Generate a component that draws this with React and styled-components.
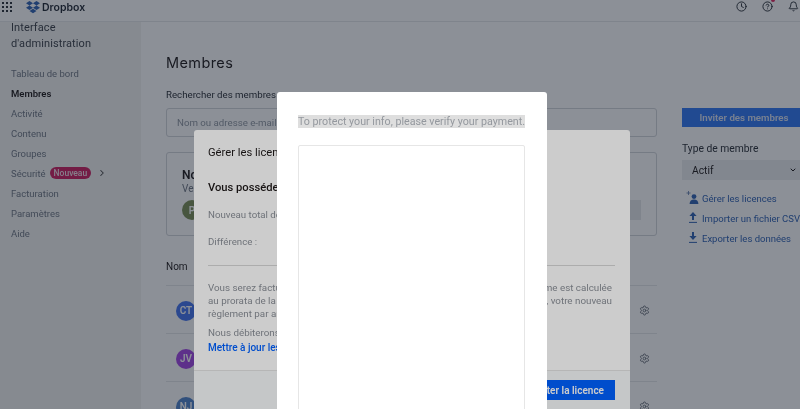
import React from "react";
import styled, { createGlobalStyle } from "styled-components";
import { Clock, CircleHelp, Bell, Settings, ChevronRight, ChevronDown } from "lucide-react";

const GlobalStyle = createGlobalStyle`
  html, body {
    margin: 0;
    padding: 0;
    height: 100%;
    overflow: hidden;
    background: #fff;
    font-family: Roboto, "Liberation Sans", sans-serif;
  }
`;

const navItems = ["Tableau de bord", "Membres", "Activité", "Contenu", "Groupes", "Sécurité", "Facturation", "Paramètres", "Aide"];

const members = [
  { initials: "CT", color: "#4274f0" },
  { initials: "JV", color: "#a545e6" },
  { initials: "NJ", color: "#4f82cc" },
];

const DropboxLogo = () => (
  <svg width="14" height="13" viewBox="0 0 24 22" fill="#2f62b4">
    <path d="M6 0 0 3.9l6 3.8-6 3.9 6 3.8 6-3.9 6 3.9 6-3.8-6-3.9 6-3.8L18 0l-6 3.9zM12 3.9l6 3.8-6 3.9-6-3.9zM6 17l6 3.9 6-3.9-6-3.8z" />
  </svg>
);

const AddUserIcon = () => (
  <svg width="14" height="14" viewBox="0 0 14 14" fill="#2f62b4">
    <circle cx="8" cy="5.6" r="2.4" />
    <path d="M3.6 13c0-3 2-4.4 4.4-4.4s4.4 1.4 4.4 4.4z" />
    <path d="M2.5 0v4M.5 2h4" stroke="#5d79a8" strokeWidth=".8" />
  </svg>
);

const ArrowIcon = ({ down }) => (
  <svg width="14" height="14" viewBox="0 0 14 14" fill="#2f62b4">
    <path d={down ? "M6 1h2v4h2.6L7 9 3.4 5H6z" : "M7 1l3.6 4H8v4H6V5H3.4z"} />
    <path d="M3 11.4h8" stroke="#2f62b4" strokeWidth="1" />
  </svg>
);

export default function App() {
  return (
    <Screen>
      <GlobalStyle />
      <TopBar>
        <Waffle>
          {Array.from({ length: 9 }).map((_, i) => (
            <i key={i} />
          ))}
        </Waffle>
        <Brand>
          <DropboxLogo />
          <span>Dropbox</span>
        </Brand>
        <TopIcons>
          <Clock size={11} />
          <HelpWrap>
            <CircleHelp size={11} />
            <RedDot />
          </HelpWrap>
          <Bell size={11} />
        </TopIcons>
      </TopBar>

      <Body>
        <Sidebar>
          <SideTitle>Interface d'administration</SideTitle>
          <Nav>
            {navItems.map((item) => (
              <NavItem key={item} $active={item === "Membres"}>
                {item}
                {item === "Sécurité" && (
                  <>
                    <NewBadge>Nouveau</NewBadge>
                    <ChevronRight size={10} strokeWidth={2.5} />
                  </>
                )}
              </NavItem>
            ))}
          </Nav>
        </Sidebar>

        <Main>
          <Content>
            <PageTitle>Membres</PageTitle>
            <SearchLabel>Rechercher des membres</SearchLabel>
            <SearchBox>Nom ou adresse e-mail</SearchBox>
            <NoticeCard>
              <NoticeTitle>No</NoticeTitle>
              <NoticeText>Ve</NoticeText>
              <NoticeFoot>
                <Avatar $color="#7b8f55">P</Avatar>
                <GreyButton />
              </NoticeFoot>
            </NoticeCard>
            <ColumnHead>Nom</ColumnHead>
            {members.map((m) => (
              <MemberRow key={m.initials}>
                <Avatar $color={m.color}>{m.initials}</Avatar>
                <Settings size={11} />
              </MemberRow>
            ))}
          </Content>

          <Aside>
            <InviteButton>Inviter des membres</InviteButton>
            <AsideLabel>Type de membre</AsideLabel>
            <Select>
              Actif
              <ChevronDown size={8} strokeWidth={3} />
            </Select>
            <AsideLinks>
              <AsideLink><AddUserIcon />Gérer les licences</AsideLink>
              <AsideLink><ArrowIcon />Importer un fichier CSV</AsideLink>
              <AsideLink><ArrowIcon down />Exporter les données</AsideLink>
            </AsideLinks>
          </Aside>
        </Main>
      </Body>

      <Backdrop />
      <LicenceModal>
        <LicenceBody>
          <LicenceTitle>Gérer les licences</LicenceTitle>
          <LicenceHeading>Vous possédez</LicenceHeading>
          <LicenceField>Nouveau total de</LicenceField>
          <LicenceField>Différence :</LicenceField>
          <Divider />
          <Para>
            <ParaLine><span>Vous serez facturé</span><span>Cette somme est calculée</span></ParaLine>
            <ParaLine><span>au prorata de la</span><span>2022, votre nouveau</span></ParaLine>
            <ParaLine><span>règlement par an</span></ParaLine>
          </Para>
          <ParaNote>Nous débiterons</ParaNote>
          <UpdateLink>Mettre à jour les</UpdateLink>
        </LicenceBody>
        <LicenceFooter>
          <PrimaryButton>Ajouter la licence</PrimaryButton>
        </LicenceFooter>
      </LicenceModal>

      <TopBackdrop />
      <PaymentModal>
        <PaymentText>
          <mark>To protect your info, please verify your payment.</mark>
        </PaymentText>
        <PaymentFrame />
      </PaymentModal>
    </Screen>
  );
}

const Screen = styled.div`
  position: relative;
  width: 800px;
  height: 409px;
  overflow: hidden;
  background: #fff;
  color: #1e1919;
  filter: blur(0.55px);
`;

const TopBar = styled.header`
  display: flex;
  align-items: center;
  height: 22px;
  padding: 0 2px;
  box-sizing: border-box;
  border-bottom: 1px solid #e6e8ea;
`;

const Waffle = styled.div`
  display: grid;
  grid-template-columns: repeat(3, 2px);
  gap: 2px;
  margin-top: -7px;
  i { width: 2px; height: 2px; background: #2a2f38; }
`;

const Brand = styled.div`
  display: flex;
  align-items: center;
  gap: 2px;
  margin-left: 14px;
  font-family: Inter, sans-serif;
  font-size: 10.5px;
  font-weight: 600;
  color: #1e2530;
  margin-top: -7px;
  svg { display: block; }
`;

const TopIcons = styled.div`
  display: flex;
  align-items: center;
  gap: 15px;
  margin-left: auto;
  margin-right: -1px;
  margin-top: -8px;
  color: #20262e;
  svg { display: block; }
`;

const HelpWrap = styled.div`
  position: relative;
`;

const RedDot = styled.span`
  position: absolute;
  top: -3px;
  right: -2px;
  width: 4px;
  height: 4px;
  border-radius: 50%;
  background: #e0245e;
`;

const Body = styled.div`
  display: flex;
`;

const Sidebar = styled.aside`
  width: 141px;
  height: 387px;
  flex-shrink: 0;
  box-sizing: border-box;
  padding-left: 11px;
  background: #f4f4f2;
`;

const SideTitle = styled.div`
  width: 90px;
  margin-top: -2px;
  font-size: 11px;
  line-height: 16px;
  letter-spacing: 0.1px;
  color: #3a3f47;
`;

const Nav = styled.nav`
  display: flex;
  flex-direction: column;
  margin-top: 11px;
`;

const NavItem = styled.div`
  display: flex;
  align-items: center;
  height: 20px;
  font-size: 9.5px;
  font-weight: ${(p) => (p.$active ? 600 : 400)};
  color: ${(p) => (p.$active ? "#1e1919" : "#6f7783")};
  svg { margin-left: 6px; color: #444; }
`;

const NewBadge = styled.span`
  margin-left: 4px;
  padding: 0 4px;
  border-radius: 6px;
  background: #cf1f60;
  color: #f4dfe8;
  font-size: 8.5px;
  font-weight: 500;
  line-height: 12px;
`;

const Main = styled.main`
  display: flex;
  gap: 25px;
  padding-left: 25px;
`;

const Content = styled.div`
  width: 491px;
`;

const PageTitle = styled.h1`
  margin: 31px 0 0;
  font-family: Inter, sans-serif;
  font-size: 14.5px;
  line-height: 20px;
  font-weight: 400;
  letter-spacing: 0.4px;
  color: #1e1919;
`;

const SearchLabel = styled.div`
  margin-top: 15px;
  font-size: 9.7px;
  line-height: 14px;
  color: #2a2f36;
`;

const SearchBox = styled.div`
  display: flex;
  align-items: center;
  height: 29px;
  margin-top: 6px;
  padding-left: 10px;
  box-sizing: border-box;
  border: 1px solid #d3d6da;
  border-radius: 3px;
  font-size: 9.7px;
  color: #8f97a1;
`;

const NoticeCard = styled.section`
  height: 84px;
  margin-top: 15px;
  padding: 15px 15px 0;
  box-sizing: border-box;
  border: 1px solid #d3d6da;
  border-radius: 3px;
`;

const NoticeTitle = styled.div`
  font-size: 12px;
  line-height: 14px;
  font-weight: 600;
`;

const NoticeText = styled.div`
  font-size: 10px;
  line-height: 14px;
  color: #6f7783;
`;

const NoticeFoot = styled.div`
  display: flex;
  align-items: center;
  justify-content: space-between;
  margin-top: 4px;
`;

const Avatar = styled.div`
  display: flex;
  align-items: center;
  justify-content: center;
  width: 20px;
  height: 20px;
  border-radius: 50%;
  background: ${(p) => p.$color};
  color: #fff;
  font-size: 10px;
  font-weight: 600;
`;

const GreyButton = styled.div`
  width: 60px;
  height: 20px;
  background: #e6e8ea;
`;

const ColumnHead = styled.div`
  margin-top: 24px;
  height: 25px;
  font-size: 10px;
  line-height: 14px;
`;

const MemberRow = styled.div`
  display: flex;
  align-items: center;
  justify-content: space-between;
  height: 48px;
  padding: 2px 7px 0 10px;
  box-sizing: border-box;
  border-top: 1px solid #e6e8ea;
  svg { color: #6b727c; }
`;

const Aside = styled.aside`
  width: 124px;
  flex-shrink: 0;
  padding-top: 86px;
`;

const InviteButton = styled.div`
  display: flex;
  align-items: center;
  justify-content: center;
  height: 19px;
  background: #2f77f5;
  color: #d8e2f5;
  font-size: 9.7px;
  font-weight: 600;
`;

const AsideLabel = styled.div`
  margin-top: 15px;
  font-size: 10.3px;
  line-height: 14px;
  color: #2a2f36;
`;

const Select = styled.div`
  display: flex;
  align-items: center;
  justify-content: space-between;
  height: 20px;
  margin-top: 4px;
  padding: 0 9px 0 10px;
  background: #eceef0;
  font-size: 10.3px;
`;

const AsideLinks = styled.div`
  display: flex;
  flex-direction: column;
  margin-top: 8px;
`;

const AsideLink = styled.div`
  display: flex;
  align-items: center;
  gap: 2px;
  height: 20px;
  white-space: nowrap;
  padding-left: 4px;
  font-size: 9.5px;
  color: #2f62b4;
  svg { flex-shrink: 0; }
`;

const Backdrop = styled.div`
  position: absolute;
  inset: 0;
  background: rgba(33, 47, 72, 0.36);
`;

const LicenceModal = styled.div`
  position: absolute;
  left: 194px;
  top: 130px;
  width: 436px;
  height: 300px;
  display: flex;
  flex-direction: column;
  border-radius: 3px;
  background: #fff;
  overflow: hidden;
`;

const LicenceBody = styled.div`
  height: 240px;
  box-sizing: border-box;
  padding: 16px 15px 0 14px;
`;

const LicenceTitle = styled.div`
  font-size: 11.2px;
  line-height: 14px;
  color: #1e1919;
`;

const LicenceHeading = styled.div`
  margin-top: 21px;
  font-size: 11.2px;
  line-height: 14px;
  font-weight: 500;
`;

const LicenceField = styled.div`
  margin-top: 13px;
  height: 14px;
  font-size: 9.7px;
  line-height: 14px;
  color: #8b9098;
  & + & { margin-top: 13px; }
`;

const Divider = styled.hr`
  margin: 16px 0 0;
  border: 0;
  border-top: 1px solid #d8d8d8;
`;

const Para = styled.div`
  margin-top: 15px;
`;

const ParaLine = styled.div`
  display: flex;
  justify-content: space-between;
  padding-right: 3px;
  font-size: 9.8px;
  line-height: 13px;
  color: #8b9098;
`;

const ParaNote = styled.div`
  margin-top: 6px;
  font-size: 9.8px;
  line-height: 13px;
  color: #8b9098;
`;

const UpdateLink = styled.div`
  margin-top: 2px;
  font-size: 10px;
  line-height: 13px;
  font-weight: 500;
  color: #0061ff;
`;

const LicenceFooter = styled.div`
  flex: 1;
  display: flex;
  justify-content: flex-end;
  align-items: flex-start;
  padding: 9px 15px 0 0;
  border-top: 1px solid #e4e4e4;
  background: #f7f9fa;
`;

const PrimaryButton = styled.div`
  display: flex;
  align-items: center;
  padding: 0 11px;
  height: 20px;
  background: #0061ff;
  color: #fff;
  font-size: 10px;
  font-weight: 600;
`;

const TopBackdrop = styled.div`
  position: absolute;
  inset: 0;
  background: rgba(0, 0, 0, 0.2);
`;

const PaymentModal = styled.div`
  position: absolute;
  left: 277px;
  top: 92px;
  width: 270px;
  height: 340px;
  box-sizing: border-box;
  padding: 23px 22px 0 21px;
  border-radius: 3px;
  background: #fff;
`;

const PaymentText = styled.div`
  font-size: 10.7px;
  line-height: 14px;
  white-space: nowrap;
  color: #94989e;
  mark {
    background: #dedede;
    color: inherit;
  }
`;

const PaymentFrame = styled.div`
  height: 280px;
  margin-top: 16px;
  border: 1px solid #e6e6e6;
  border-radius: 2px;
`;
